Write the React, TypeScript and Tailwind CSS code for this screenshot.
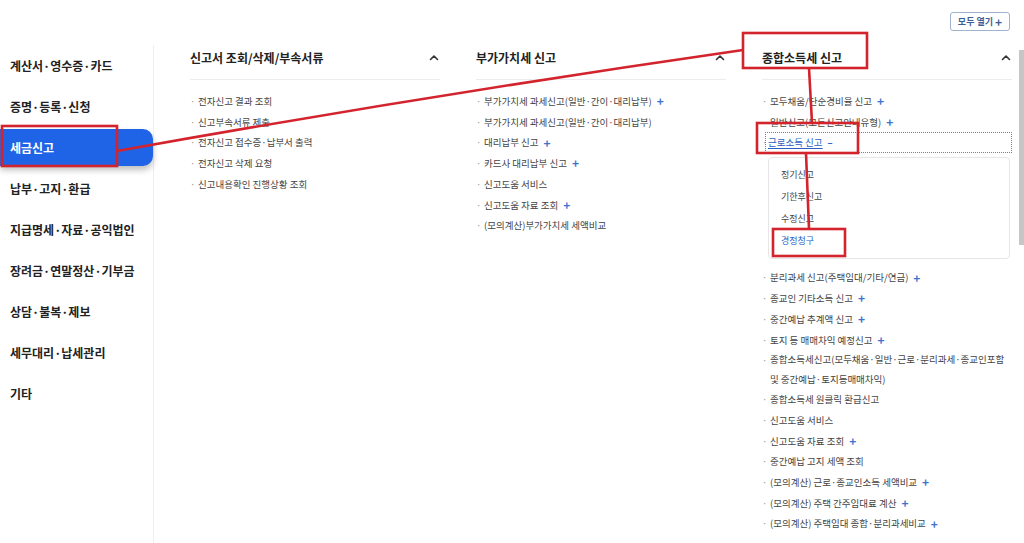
import React from 'react';

// 세금신고 메뉴 — 전체 메뉴 화면 (주석 표시 포함)

type Item = { label: React.ReactNode; plus?: boolean };

const sideMenu = [
  '계산서·영수증·카드',
  '증명·등록·신청',
  '세금신고',
  '납부·고지·환급',
  '지급명세·자료·공익법인',
  '장려금·연말정산·기부금',
  '상담·불복·제보',
  '세무대리·납세관리',
  '기타',
];

const col1: Item[] = [
  { label: '전자신고 결과 조회' },
  { label: '신고부속서류 제출' },
  { label: '전자신고 접수증·납부서 출력' },
  { label: '전자신고 삭제 요청' },
  { label: '신고내용확인 진행상황 조회' },
];

const col2: Item[] = [
  { label: '부가가치세 과세신고(일반·간이·대리납부)', plus: true },
  { label: '부가가치세 과세신고(일반·간이·대리납부)' },
  { label: '대리납부 신고', plus: true },
  { label: '카드사 대리납부 신고', plus: true },
  { label: '신고도움 서비스' },
  { label: '신고도움 자료 조회', plus: true },
  { label: '(모의계산)부가가치세 세액비교' },
];

const col3Top: Item[] = [
  { label: '모두채움/단순경비율 신고', plus: true },
  { label: '일반신고(모든신고안내유형)', plus: true },
];

const col3Bottom: Item[] = [
  { label: '분리과세 신고(주택임대/기타/연금)', plus: true },
  { label: '종교인 기타소득 신고', plus: true },
  { label: '중간예납 추계액 신고', plus: true },
  { label: '토지 등 매매차익 예정신고', plus: true },
  {
    label: (
      <span className="block whitespace-nowrap leading-[19.5px]">
        종합소득세신고(모두채움·일반·근로·분리과세·종교인포함
        <br />및 중간예납·토지등매매차익)
      </span>
    ),
  },
  { label: '종합소득세 원클릭 환급신고' },
  { label: '신고도움 서비스' },
  { label: '신고도움 자료 조회', plus: true },
  { label: '중간예납 고지 세액 조회' },
  { label: '(모의계산) 근로·종교인소득 세액비교', plus: true },
  { label: '(모의계산) 주택 간주임대료 계산', plus: true },
  { label: '(모의계산) 주택임대 종합·분리과세비교', plus: true },
];

function ChevronUp() {
  return (
    <svg width="10" height="7" viewBox="0 0 10 7" fill="none">
      <path d="M1.5 5.5 5 2 8.5 5.5" stroke="#333" strokeWidth="1.6" strokeLinecap="round" strokeLinejoin="round" />
    </svg>
  );
}

function Plus() {
  return <span className="ml-[5px] text-[12px] font-bold leading-none text-[#3f72cf]">+</span>;
}

function Row({ item }: { item: Item }) {
  return (
    <li className="flex items-start leading-[20.7px]">
      <span className="w-[8px] shrink-0 text-[#999]">·</span>
      <span className="flex items-center">
        {item.label}
        {item.plus && <Plus />}
      </span>
    </li>
  );
}

function ColumnHeader({ title }: { title: string }) {
  return (
    <div className="flex h-[35px] items-start justify-between border-b border-[#ececec] pt-[5px]">
      <h3 className="text-[12px] font-bold leading-[16px] text-[#222]">{title}</h3>
      <span className="mr-[1px] mt-[4px]">
        <ChevronUp />
      </span>
    </div>
  );
}

export default function App() {
  return (
    <div className="relative h-[543px] w-[1024px] overflow-hidden bg-white font-['Noto_Sans_CJK_KR','Noto_Sans',sans-serif]">
      {/* 상단: 모두 열기 */}
      <div className="flex h-[45px] justify-end pr-[14px] pt-[12px]">
        <button className="flex h-[19px] w-[60px] items-center justify-center gap-[2px] rounded-[3px] border border-[#9fb3cf] text-[9px] font-bold text-[#3d5f95]">
          모두 열기 <span className="text-[12px] font-bold leading-none">+</span>
        </button>
      </div>

      <div className="flex">
        {/* 좌측 메뉴 */}
        <nav className="h-[498px] w-[154px] shrink-0 border-r border-[#eeeeee]">
          {sideMenu.map((m) =>
            m === '세금신고' ? (
              <div key={m} className="flex h-[41px] items-center">
                <div className="flex h-[37px] w-full items-center rounded-r-[10px] bg-[#1f64e6] px-[10px] text-[12px] font-bold text-white shadow-[0_4px_6px_rgba(0,0,0,0.25)]">
                  {m}
                </div>
              </div>
            ) : (
              <div key={m} className="flex h-[41px] items-center px-[10px] text-[12px] font-bold text-[#222]">
                {m}
              </div>
            )
          )}
        </nav>

        {/* 메뉴 컬럼 */}
        <div className="flex gap-[36px] pl-[36px] text-[9.5px] text-[#444]">
          <section className="w-[250px]">
            <ColumnHeader title="신고서 조회/삭제/부속서류" />
            <ul className="pt-[11px]">
              {col1.map((it, i) => (
                <Row key={i} item={it} />
              ))}
            </ul>
          </section>

          <section className="w-[250px]">
            <ColumnHeader title="부가가치세 신고" />
            <ul className="pt-[11px]">
              {col2.map((it, i) => (
                <Row key={i} item={it} />
              ))}
            </ul>
          </section>

          <section className="w-[250px]">
            <ColumnHeader title="종합소득세 신고" />
            <ul className="pt-[11px]">
              {col3Top.map((it, i) => (
                <Row key={i} item={it} />
              ))}
              <li className="flex items-center leading-[19px]">
                <span className="w-[3px] shrink-0 text-[#999]">·</span>
                <span className="flex flex-1 items-center border border-dotted border-[#6d7fa3] pl-[2px] text-[#2a5fc4]">
                  <span className="underline underline-offset-2">근로소득 신고</span>
                  <span className="ml-[5px] font-bold">–</span>
                </span>
              </li>
              <li className="ml-[6px] mr-[2px] mt-[4px] mb-[8px] rounded-[4px] border border-[#e6e6e6] px-[12px] py-[6px] text-[9px] text-[#444]">
                <div className="leading-[22px]">정기신고</div>
                <div className="leading-[22px]">기한후신고</div>
                <div className="leading-[22px]">수정신고</div>
                <div className="leading-[22px] text-[#2a5fc4]">경정청구</div>
              </li>
              {col3Bottom.map((it, i) => (
                <Row key={i} item={it} />
              ))}
            </ul>
          </section>
        </div>
      </div>

      {/* 스크롤바 */}
      <div className="absolute right-0 top-[50px] h-[195px] w-[5px] bg-[#c6c6c6]" />

      {/* 빨간 주석 표시 */}
      <svg className="pointer-events-none absolute inset-0" width="1024" height="543" viewBox="0 0 1024 543" fill="none">
        <g stroke="#d3232c" strokeWidth="2.6">
          <rect x="2" y="126" width="115" height="40" />
          <rect x="743" y="33" width="124" height="35" />
          <rect x="757" y="123" width="101" height="30" />
          <rect x="773" y="229" width="72" height="27" />
          <path d="M117 151 Q 430 95 743 50" />
          <path d="M809 68 L812 123" />
          <path d="M806 153 L809 229" />
        </g>
      </svg>
    </div>
  );
}
